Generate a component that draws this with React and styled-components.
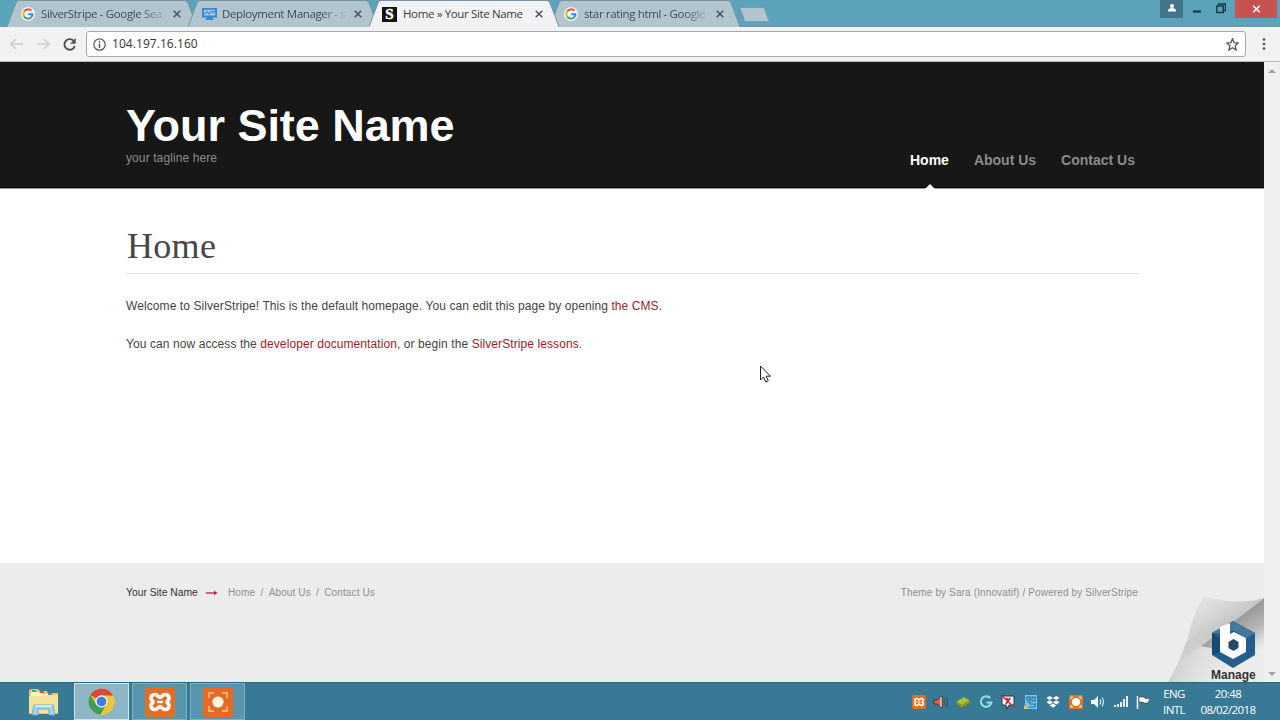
import styled, { createGlobalStyle } from 'styled-components'

const GlobalStyle = createGlobalStyle`
  * {
    box-sizing: border-box;
  }

  body {
    margin: 0;
    overflow: hidden;
    font-family: "Liberation Sans", Arial, sans-serif;
  }

  svg {
    display: block;
    flex: none;
  }
`

const Screen = styled.div`
  display: flex;
  flex-direction: column;
  width: 1280px;
  height: 720px;
  overflow: hidden;
`

/* Browser chrome */
const TabStrip = styled.div`
  display: flex;
  justify-content: space-between;
  height: 27px;
  background: #5aa3bb;
  border-bottom: 1px solid #6f96a5;
`

const Tabs = styled.div`
  display: flex;
  padding-left: 7px;
`

const Tab = styled.div`
  position: relative;
  z-index: ${props => props.$active ? 2 : 1};
  display: flex;
  align-items: center;
  width: 191px;
  height: 27px;
  margin-right: -10px;
  padding: 1px 0 0 ${props => props.$active ? 13 : 14}px;
`

const TabShape = styled.svg`
  position: absolute;
  left: 0;
  top: 0;
  z-index: -1;
`

const TabTitle = styled.div`
  width: 126px;
  margin-left: ${props => props.$gap || 6}px;
  margin-right: auto;
  white-space: nowrap;
  font: 11.5px/18px "Open Sans", sans-serif;
  letter-spacing: -0.36px;
  color: ${props => props.$active ? '#3b3c40' : '#3d4d55'};
  mask-image: ${props => props.$active ? 'none' : 'linear-gradient(90deg, #000 100px, transparent 126px)'};
`

const TabClose = styled.svg`
  margin-right: 17px;
`

const SilverStripeIcon = styled.div`
  width: 15px;
  height: 15px;
  text-align: center;
  font: bold 15px/15px "Liberation Serif", serif;
  color: #fff;
  background: #141414;
  -webkit-text-stroke: 0.5px #fff;
`

const NewTab = styled.svg`
  margin: 6px 0 0 8px;
`

const WindowButtons = styled.div`
  display: flex;
  height: 18px;
  padding-right: 3px;
`

const WindowButton = styled.div`
  display: flex;
  justify-content: center;
  width: ${props => props.$width}px;
  height: 18px;
  background: ${props => props.$bg || 'transparent'};

  &:last-child {
    margin-left: 4px;
  }
`

const Toolbar = styled.div`
  display: flex;
  align-items: center;
  height: 35px;
  padding: 0 8px;
  background: #f2f1f3;
  border-bottom: 1px solid #b9b9bb;
`

const NavButtons = styled.div`
  display: flex;
  align-items: center;
  gap: 10px;
  width: 78px;
`

const AddressBar = styled.div`
  display: flex;
  align-items: center;
  width: 1160px;
  height: 26px;
  padding: 0 6px;
  background: #fff;
  border: 1px solid #a9a9ab;
  border-radius: 3px;
`

const Url = styled.div`
  flex: 1;
  margin-left: 6px;
  font: 12px/18px "Open Sans", sans-serif;
  letter-spacing: 0.06px;
  color: #333;
`

const MenuDots = styled.svg`
  margin-left: 16px;
`

/* Web page */
const Viewport = styled.div`
  display: flex;
  height: 620px;
`

const Page = styled.div`
  position: relative;
  width: 1264px;
  background: #fff;
`

const Scrollbar = styled.div`
  display: flex;
  flex-direction: column;
  justify-content: space-between;
  align-items: center;
  width: 16px;
  padding: 6px 0 5px;
  background: #f0f0f0;
`

const SiteHeader = styled.header`
  display: flex;
  justify-content: space-between;
  height: 127px;
  padding: 0 129px 0 126px;
  background: linear-gradient(#171717 125px, #000 125px, #000 126px, #9a9a9a 126px);
`

const SiteName = styled.h1`
  margin: 38px 0 0;
  font-size: 45px;
  line-height: 51px;
  letter-spacing: -0.05px;
  color: #fff;
`

const Tagline = styled.p`
  margin: 0;
  font-size: 12px;
  line-height: 14px;
  letter-spacing: 0.1px;
  color: #8b8b8b;
`

const MainNav = styled.nav`
  display: flex;
  gap: 25px;
  padding-top: 89px;
`

const NavItem = styled.a`
  display: flex;
  flex-direction: column;
  align-items: center;
  justify-content: space-between;
  height: 38px;
  font-size: 14px;
  font-weight: bold;
  line-height: 18px;
  color: ${props => props.$current ? '#fff' : '#8a8a8a'};

  svg {
    margin-left: 2px;
  }
`

const Content = styled.main`
  height: 374px;
  padding: 35px 125px 0 126px;
`

const PageTitle = styled.h2`
  margin: 0 0 22px;
  height: 50px;
  padding-left: 1px;
  font: 36px/44px "Liberation Serif", serif;
  letter-spacing: 0.3px;
  color: #464648;
  border-bottom: 1px solid #e5e5e5;
`

const Paragraph = styled.p`
  margin: 0 0 17.5px;
  font-size: 12px;
  line-height: 20px;
  letter-spacing: 0.085px;
  color: #444;
`

const Link = styled.a`
  color: #9c1c28;
`

const SiteFooter = styled.footer`
  display: flex;
  justify-content: space-between;
  height: 119px;
  padding: 22px 126px 0;
  background: #ececec;
  font-size: 10px;
  line-height: 16px;
  color: #8f8f8f;
`

const FooterNav = styled.div`
  display: flex;
  align-items: center;
  height: 16px;
  letter-spacing: 0.12px;
`

const FooterBrand = styled.span`
  width: 80px;
  font-size: 10.3px;
  letter-spacing: 0;
  color: #333;
`

const FooterLink = styled.span`
  margin-left: ${props => props.$gap || 5.3}px;
`

const Credit = styled.div`
  letter-spacing: 0.13px;
`

/* Peeled page corner lying over the footer */
const Corner = styled.div`
  position: absolute;
  right: 0;
  bottom: 0;
  width: 100px;
  height: 86px;
`

const ManageLabel = styled.div`
  position: absolute;
  left: 47px;
  bottom: 0;
  font-size: 12px;
  font-weight: bold;
  line-height: 14px;
  letter-spacing: 0;
  color: #333;
`

const Cursor = styled.svg`
  position: absolute;
  left: 759px;
  top: 303px;
`

/* Windows taskbar */
const Taskbar = styled.div`
  display: flex;
  justify-content: space-between;
  height: 38px;
  background: #387a95;
  border-top: 1px solid #2c6881;
`

const TaskButtons = styled.div`
  display: flex;
  padding-left: 16px;
  gap: 3px;
`

const TaskButton = styled.div`
  display: flex;
  align-items: center;
  justify-content: center;
  width: 55px;
  height: 37px;
  background: ${props => props.$active ? '#8fb6c6' : props.$open ? '#5796ad' : 'transparent'};
  border: 1px solid ${props => props.$active ? '#d3e4eb' : props.$open ? '#7fb0c2' : 'transparent'};
`

const Tray = styled.div`
  display: flex;
  align-items: center;
  height: 37px;
  padding-right: 11px;
`

const TrayIcons = styled.div`
  display: flex;
  align-items: center;
  gap: 6.5px;
  margin-right: 10px;
`

const TrayText = styled.div`
  width: ${props => props.$width}px;
  text-align: center;
  font: 11.5px/16px "Open Sans", sans-serif;
  letter-spacing: -0.6px;
  color: #fff;
`

const GoogleG = ({size = 14}) => (
  <svg width={size} height={size} viewBox="0 0 14 14">
    <circle cx="7" cy="7" r="7" fill="#f4f6f7" />
    <g fill="none" strokeWidth="2">
      <path d="M10.4 3.8A4.6 4.6 0 0 0 3.1 4.6" stroke="#e2503f" />
      <path d="M3.1 4.6A4.6 4.6 0 0 0 3.1 9.5" stroke="#eeb529" />
      <path d="M3.1 9.5A4.6 4.6 0 0 0 10 10.5" stroke="#43a45c" />
      <path d="M10 10.5A4.6 4.6 0 0 0 11.5 7.2H7.2" stroke="#3e82e5" />
    </g>
  </svg>
)

const MonitorIcon = () => (
  <svg width="15" height="14" viewBox="0 0 16 14">
    <path d="M0 .5h16v10.2h-5l1.5 2.8h-9L5 10.7H0z" fill="#3b86cf" />
    <path d="M2 2.5h12v6H2z" fill="#a9cbe9" />
    <path d="M2.5 7l3-2.5 2 2.5 2.5-3 1.5 1.5L14 4" fill="none" stroke="#3b7fc6" strokeWidth="1.1" />
  </svg>
)

const CloseIcon = () => (
  <TabClose width="8" height="8" viewBox="0 0 8 8">
    <path d="M.7.7l6.6 6.6M7.3.7L.7 7.3" stroke="#4a5459" strokeWidth="1.5" />
  </TabClose>
)

const XamppIcon = ({size}) => (
  <svg width={size} height={size} viewBox="0 0 30 30">
    <rect width="30" height="30" rx="4" fill="#e36d20" />
    <path
      d="M10 7.5c3 0 3 3 5 3s2-3 5-3 4 2 4 4-2 2-2 3.5 2 1.5 2 3.5-1 4-4 4-3-3-5-3-2 3-5 3-4-2-4-4 2-2 2-3.5-2-1.5-2-3.5 1-4 4-4z"
      fill="#e36d20"
      stroke="#fff"
      strokeWidth="3.6"
    />
    <path d="M12 15h6" stroke="#fff" strokeWidth="2.4" />
  </svg>
)

const RecorderIcon = ({size}) => (
  <svg width={size} height={size} viewBox="0 0 30 30">
    <rect width="30" height="30" fill="#e56a24" />
    <path d="M6 11V6h5M19 6h5v5M24 19v5h-5M11 24H6v-5" fill="none" stroke="#fbc79a" strokeWidth="1.4" />
    <circle cx="15" cy="15" r="5.6" fill="#fff7e6" />
  </svg>
)

const ExplorerIcon = () => (
  <svg width="31" height="28" viewBox="0 0 31 28">
    <path d="M1 2l2-1h7l2 2h7l1 2h10v21H1z" fill="#e6c969" />
    <path d="M3 4h8l2 2h7l2 2h6v4H3z" fill="#fff6cd" />
    <path d="M1 8h12l2-1h15v18H1z" fill="#f6e39a" />
    <path d="M4 2h4v2H4z" fill="#4bae54" />
    <path d="M12 3h4v2h-4z" fill="#d45b42" />
    <path d="M20 5h4v2h-4z" fill="#478fc9" />
    <path d="M6 17h19l2 10h-6v-6H10v6H4z" fill="#9fd3ee" stroke="#6baed2" />
    <path d="M7 18h17" stroke="#e4f7ff" strokeWidth="1.5" />
  </svg>
)

const ChromeIcon = () => (
  <svg width="27" height="27" viewBox="0 0 28 28">
    <circle cx="14" cy="14" r="13.5" fill="#efc63b" />
    <path d="M14 14L2.3 7.2A13.5 13.5 0 0 1 25.7 7.2L26 8H14z" fill="#d9483c" />
    <path d="M2.3 7.2A13.5 13.5 0 0 0 13 27.5L19.2 17 14 14 8.8 17z" fill="#3e9f55" />
    <path d="M14 8h12.1A13.5 13.5 0 0 1 13 27.5L19.2 17z" fill="#efc63b" />
    <circle cx="14" cy="14" r="6.4" fill="#f1f3f4" />
    <circle cx="14" cy="14" r="5" fill="#3f7de0" />
  </svg>
)

//Small drawings of the notification area, each in a 16px cell
const trayDrawings = [
  <g key="volume">
    <path d="M1 6h3l5-4v12l-5-4H1z" fill="#d8694e" stroke="#542e2b" />
    <path d="M8 3v10" stroke="#e9c6b8" strokeWidth="1.5" />
    <path d="M11 5q2 3 0 6M13 3q3 5 0 10" fill="none" stroke="#385361" strokeWidth="1.2" />
  </g>,
  <g key="stack">
    <path d="M1 8l8-5 6 3.5-8 5z" fill="#a6c32e" />
    <path d="M1 8l6 3.5 8-5v3l-8 5-6-4z" fill="#54751d" />
    <path d="M1.5 9.5l5.5 3.3 8-5" fill="none" stroke="#d6a23b" />
  </g>,
  <path key="g" d="M12.3 4.2A5.3 5.3 0 1 0 13.4 8.5H8.5" fill="none" stroke="#8ae5e5" strokeWidth="2" />,
  <g key="flag">
    <path d="M2 2h12v9H9l-2 4-1-4H2z" fill="#f1eeee" stroke="#303b42" />
    <path d="M10 4L6 10M6.5 4l2 3" stroke="#b5283b" strokeWidth="1.8" />
    <path d="M1 1l14 13" stroke="#c4283b" strokeWidth="1.3" />
  </g>,
  <g key="panel">
    <path d="M2 1h12v14H2z" fill="#79c4ed" />
    <path d="M4 3h3v3H4zM9 3h3v4H9zM4 8h3v2h5v3H6" fill="none" stroke="#246c9c" strokeWidth="1.2" />
    <path d="M1 11l4 4H1z" fill="#e3bd59" />
  </g>,
  <path key="dropbox" d="M4.7 2l3.3 2-3.3 2.1L1.4 4zM11.3 2l3.3 2-3.3 2.1L8 4zM4.7 6.2L8 8.3l-3.3 2.1-3.3-2.1zM11.3 6.2l3.3 2.1-3.3 2.1L8 8.3zM8 9.4l3.2 2.1L8 13.7l-3.2-2.2z" fill="#fff" />,
  <g key="recorder">
    <rect x="1" y="1" width="14" height="14" fill="#df7429" />
    <path d="M3 5V3h2M11 3h2v2M13 11v2h-2M5 13H3v-2" fill="none" stroke="#fff" />
    <circle cx="8" cy="8" r="4" fill="#fff" />
  </g>,
  <g key="speaker">
    <path d="M1 6h3l4-4v12l-4-4H1z" fill="#eff5f7" />
    <path d="M10 5.5q1.7 2.5 0 5M12 3.5q3 4.5 0 9" fill="none" stroke="#e1ebef" strokeWidth="1.1" />
  </g>,
  <path key="signal" d="M1 11h2v2H1zM4 10h2v3H4zM7 8h2v5H7zM10 5h2v8h-2zM13 2h2v11h-2z" fill="#e6eff3" />,
  <g key="action">
    <path d="M2.5 2v13" stroke="#fff" strokeWidth="1.5" />
    <path d="M4 3h5l1 1.5h5L13 9H9L8 8H4z" fill="#fff" stroke="#263f4a" strokeWidth=".6" />
  </g>,
]

const tabs = [
  {title: 'SilverStripe - Google Sea', icon: <GoogleG />},
  {title: 'Deployment Manager - s', icon: <MonitorIcon />, gap: 5},
  {title: 'Home » Your Site Name', icon: <SilverStripeIcon>S</SilverStripeIcon>, active: true},
  {title: 'star rating html - Google', icon: <GoogleG />},
]

const Browser = () => (
  <>
    <TabStrip>
      <Tabs>
        {tabs.map(t => (
          <Tab key={t.title} $active={t.active}>
            <TabShape width="191" height="27" viewBox="0 0 191 27">
              <path
                d="M0 27L9 3Q10 .5 12 .5H178Q180 .5 181 3L190 27"
                fill={t.active ? '#f2f1f3' : '#b0c5cd'}
                stroke="#7b959e"
              />
            </TabShape>
            {t.icon}
            <TabTitle $active={t.active} $gap={t.gap}>{t.title}</TabTitle>
            <CloseIcon />
          </Tab>
        ))}
        <NewTab width="31" height="17" viewBox="0 0 31 17">
          <path d="M1 2.5Q1 1.5 2 1.5H24Q25 1.5 25.5 2.5L29.5 14Q30 15.5 28.5 15.5H7Q6 15.5 5.5 14.5z" fill="#b0c5cd" stroke="#7c9daa" />
        </NewTab>
      </Tabs>
      <WindowButtons>
        <WindowButton $width={23} $bg="#43758a">
          <svg width="10" height="12" viewBox="0 0 10 12">
            <circle cx="5" cy="6" r="2" fill="#fff" />
            <path d="M1 11.5V10q1-2 4-2t4 2v1.5z" fill="#fff" />
          </svg>
        </WindowButton>
        <WindowButton $width={28}>
          <svg width="8" height="13" viewBox="0 0 8 13"><path d="M0 11.5h8" stroke="#172f3b" strokeWidth="2" /></svg>
        </WindowButton>
        <WindowButton $width={20}>
          <svg width="10" height="14" viewBox="0 0 10 14">
            <path d="M.8 6h6.5v6.5H.8zM2.5 5.5V4h7v6.5H8" fill="none" stroke="#1c3948" strokeWidth="1.4" />
          </svg>
        </WindowButton>
        <WindowButton $width={42} $bg="#c75050">
          <svg width="9" height="14" viewBox="0 0 9 14"><path d="M1.2 5.7l6.5 6.5M7.7 5.7l-6.5 6.5" stroke="#fff" strokeWidth="1.6" /></svg>
        </WindowButton>
      </WindowButtons>
    </TabStrip>
    <Toolbar>
      <NavButtons>
        <svg width="17" height="14" viewBox="0 0 17 14"><path d="M15 7H3M8 2L3 7l5 5" fill="none" stroke="#d0cfd1" strokeWidth="1.7" /></svg>
        <svg width="17" height="14" viewBox="0 0 17 14"><path d="M2 7h12M9 2l5 5-5 5" fill="none" stroke="#d0cfd1" strokeWidth="1.7" /></svg>
        <svg width="15" height="15" viewBox="0 0 15 15">
          <path d="M11.5 3.7A5.3 5.3 0 1 0 12.8 9" fill="none" stroke="#505052" strokeWidth="1.9" />
          <path d="M13.7 1v5.7H8z" fill="#505052" />
        </svg>
      </NavButtons>
      <AddressBar>
        <svg width="13" height="13" viewBox="0 0 13 13">
          <circle cx="6.5" cy="6.5" r="5.7" fill="none" stroke="#59595b" strokeWidth="1.2" />
          <path d="M6.5 5.6V10M6.5 3v1.5" stroke="#59595b" strokeWidth="1.5" />
        </svg>
        <Url>104.197.16.160</Url>
        <svg width="13" height="13" viewBox="0.5 0.5 13 13">
          <path d="M7 1.2l1.6 4 4.3.3-3.3 2.8 1 4.2L7 10.2l-3.6 2.3 1-4.2L1.1 5.5l4.3-.3z" fill="none" stroke="#555" strokeWidth="1.3" />
        </svg>
      </AddressBar>
      <MenuDots width="4" height="14" viewBox="0 0 4 14">
        <circle cx="2" cy="2.5" r="1.3" fill="#505050" />
        <circle cx="2" cy="7" r="1.3" fill="#505050" />
        <circle cx="2" cy="11.5" r="1.3" fill="#505050" />
      </MenuDots>
    </Toolbar>
  </>
)

const PageCorner = () => (
  <Corner>
    <svg width="100" height="86" viewBox="0 0 100 86">
      <defs>
        <linearGradient id="under" gradientUnits="userSpaceOnUse" x1="14" y1="60" x2="60" y2="82">
          <stop offset="0" stopColor="#cfcfcf" />
          <stop offset=".4" stopColor="#dedede" />
          <stop offset="1" stopColor="#ececec" />
        </linearGradient>
        <linearGradient id="shade" gradientUnits="userSpaceOnUse" x1="70" y1="24" x2="90" y2="58">
          <stop offset="0" stopColor="#9a9a9a" />
          <stop offset=".5" stopColor="#b9b9b9" />
          <stop offset="1" stopColor="#c9c9c9" stopOpacity="0" />
        </linearGradient>
        <linearGradient id="peel" gradientUnits="userSpaceOnUse" x1="34" y1="6" x2="56" y2="40">
          <stop offset="0" stopColor="#e3e3e3" />
          <stop offset=".5" stopColor="#d4d4d4" />
          <stop offset="1" stopColor="#c0c0c0" />
        </linearGradient>
        <linearGradient id="fade" x1="0" y1="0" x2="0" y2="1">
          <stop offset=".55" stopColor="#fff" />
          <stop offset="1" stopColor="#000" />
        </linearGradient>
        <mask id="curl">
          <rect width="100" height="64" fill="url(#fade)" />
        </mask>
      </defs>
      <path d="M60 20L100 60V86H4Q15 68 22 46z" fill="url(#under)" />
      <path d="M100 2V64L37 50z" fill="url(#shade)" />
      <path d="M41 0Q72 10 100 2Q67 28 37 50L17 64Q20 54 24 40Q30 14 41 0z" fill="url(#peel)" mask="url(#curl)" />
      <path d="M69 25l22 12v22L69 72 48 59V37z" fill="#235f8c" />
      <path d="M69 25l22 12-8 5-14-8-8 4-13-1z" fill="#44799f" />
      <path d="M48 37l8 5v14l-8 3z" fill="#174a73" />
      <path d="M56 31l10-4v11l4-2 12 6v14l-13 7-13-7z" fill="#fff" />
      <path d="M69.5 43l5 3v6l-5 3-5-3v-6z" fill="#244969" />
    </svg>
    <ManageLabel>Manage</ManageLabel>
  </Corner>
)

const Site = () => (
  <Viewport>
    <Page>
      <SiteHeader>
        <div>
          <SiteName>Your Site Name</SiteName>
          <Tagline>your tagline here</Tagline>
        </div>
        <MainNav>
          <NavItem $current>
            Home
            <svg width="10" height="5" viewBox="0 0 10 5"><path d="M0 5l5-5 5 5z" fill="#fff" /></svg>
          </NavItem>
          <NavItem>About Us</NavItem>
          <NavItem>Contact Us</NavItem>
        </MainNav>
      </SiteHeader>
      <Content>
        <PageTitle>Home</PageTitle>
        <Paragraph>
          Welcome to SilverStripe! This is the default homepage. You can edit this page by opening <Link>the CMS</Link>.
        </Paragraph>
        <Paragraph>
          You can now access the <Link>developer documentation</Link>, or begin the <Link>SilverStripe lessons</Link>.
        </Paragraph>
      </Content>
      <SiteFooter>
        <FooterNav>
          <FooterBrand>Your Site Name</FooterBrand>
          <svg width="12" height="6" viewBox="0 0 12 6">
            <path d="M0 3h9" stroke="#ad2342" strokeWidth="1.3" />
            <path d="M8 .7L11.5 3 8 5.3z" fill="#ad2342" />
          </svg>
          <FooterLink $gap={10}>Home</FooterLink>
          <FooterLink>/</FooterLink>
          <FooterLink>About Us</FooterLink>
          <FooterLink>/</FooterLink>
          <FooterLink>Contact Us</FooterLink>
        </FooterNav>
        <Credit>Theme by Sara (Innovatif) / Powered by SilverStripe</Credit>
      </SiteFooter>
      <PageCorner />
      <Cursor width="13" height="19" viewBox="0 0 13 19">
        <path d="M1.5 1v14l3-3 2.3 5 2.5-1.2-2.2-4.6h4.4z" fill="#fff" stroke="#222" />
      </Cursor>
    </Page>
    <Scrollbar>
      <svg width="8" height="5" viewBox="0 0 8 5"><path d="M0 5l4-4 4 4z" fill="#a3a3a3" /></svg>
      <svg width="8" height="5" viewBox="0 0 8 5"><path d="M0 0l4 4 4-4z" fill="#a3a3a3" /></svg>
    </Scrollbar>
  </Viewport>
)

const WindowsTaskbar = () => (
  <Taskbar>
    <TaskButtons>
      <TaskButton><ExplorerIcon /></TaskButton>
      <TaskButton $active $open><ChromeIcon /></TaskButton>
      <TaskButton $open><XamppIcon size={30} /></TaskButton>
      <TaskButton $open><RecorderIcon size={30} /></TaskButton>
    </TaskButtons>
    <Tray>
      <TrayIcons>
        <XamppIcon size={14} />
        {trayDrawings.map(d => <svg key={d.key} width="16" height="16" viewBox="0 0 16 16">{d}</svg>)}
      </TrayIcons>
      <TrayText $width={26}>ENG<br />INTL</TrayText>
      <TrayText $width={82}>20:48<br />08/02/2018</TrayText>
    </Tray>
  </Taskbar>
)

const App = () => (
  <Screen>
    <GlobalStyle />
    <Browser />
    <Site />
    <WindowsTaskbar />
  </Screen>
)

export default App
